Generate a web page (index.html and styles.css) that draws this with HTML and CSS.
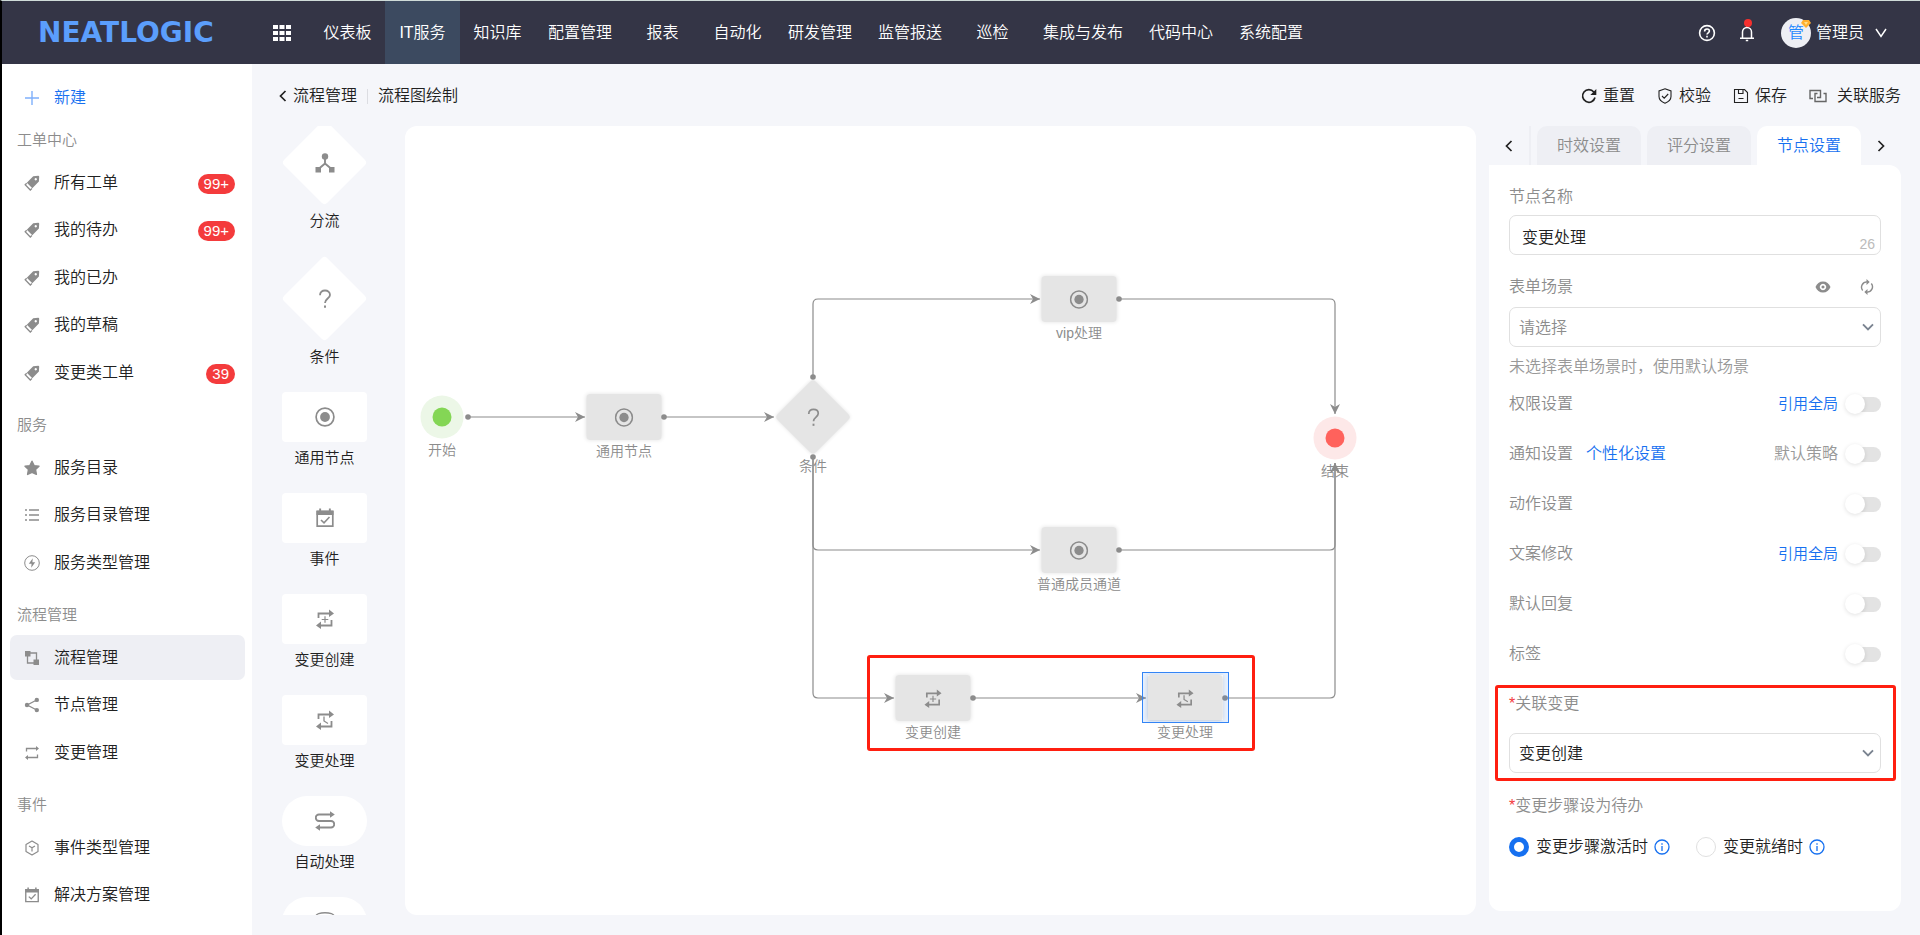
FILE: index.html
```html
<!DOCTYPE html>
<html lang="zh-CN">
<head>
<meta charset="utf-8">
<title>流程图绘制</title>
<link rel="stylesheet" href="styles.css">
</head>
<body>
<svg class="sprite" aria-hidden="true">
  <symbol id="i-tag" viewBox="0 0 16 16"><path fill="currentColor" fill-rule="evenodd" d="M9.2 1.2 14.2.8q1 0 1 1L14.9 6.600 8.300 13.300 2.800 7.700ZM11.700 3a1.200 1.200 0 1 0 .1 0Z"/><path fill="none" stroke="currentColor" stroke-width="1.300" d="M2.700 8.200 1.200 9.800 6.300 15 7.900 13.500"/></symbol>
  <symbol id="i-star" viewBox="0 0 16 16"><path fill="currentColor" stroke="currentColor" stroke-width="1.400" stroke-linejoin="round" d="M8 1.200 10.100 5.600 15 6.200 11.500 9.500 12.400 14.400 8 12.300 3.600 14.400 4.500 9.500 1 6.200 5.900 5.600Z"/></symbol>
  <symbol id="i-list" viewBox="0 0 16 16"><path fill="none" stroke="currentColor" stroke-width="1.400" d="M1 3h2M1 8h2M1 13h2M5 3h10M5 8h10M5 13h10"/></symbol>
  <symbol id="i-bolt" viewBox="0 0 16 16"><circle cx="8" cy="8" r="7.300" fill="none" stroke="currentColor"/><path fill="currentColor" d="M8.800 3.300 4.800 8.800H7.600L7.200 12.700 11.200 7.200H8.400Z"/></symbol>
  <symbol id="i-flow" viewBox="0 0 16 16"><path fill="currentColor" d="M1 1h5.500v5.500H1zM9.500 9.500h5.500v5.500h-5.500z"/><path fill="none" stroke="currentColor" stroke-width="1.300" d="M6 3h6.500v7M3.500 6v7H10"/></symbol>
  <symbol id="i-share" viewBox="0 0 16 16"><path fill="none" stroke="currentColor" stroke-width="1.300" d="M12.700 3 3.200 8l9.500 5"/><g fill="currentColor"><circle cx="12.800" cy="2.900" r="2.200"/><circle cx="3" cy="8" r="2.200"/><circle cx="12.800" cy="13.100" r="2.200"/></g></symbol>
  <symbol id="i-change" viewBox="0 0 16 16"><path fill="none" stroke="currentColor" stroke-width="1.300" d="M2.500 6.500V3.500H13M13.500 9.500v3H3"/><path fill="currentColor" d="M12 1 15 3.500 12 6ZM4 10 1 12.500 4 15Z"/></symbol>
  <symbol id="i-hex" viewBox="0 0 16 16"><path fill="none" stroke="currentColor" stroke-width="1.200" stroke-linejoin="round" d="M8 1 14 4.500v7L8 15 2 11.500v-7ZM5 6 8 7.800 11 6M8 7.800V11.500"/></symbol>
  <symbol id="i-cal" viewBox="0 0 20 20"><path fill="none" stroke="currentColor" stroke-width="1.700" d="M2.200 3.500h15.600v14.700H2.200z"/><path fill="currentColor" d="M1.500 2.500h17V7h-17zM4.200.5h1.900V3H4.200zM13.900.5h1.900V3h-1.900z"/><path fill="none" stroke="currentColor" stroke-width="1.600" d="M6 12 9 14.800 14.500 9"/></symbol>
  <symbol id="i-split" viewBox="0 0 20 20"><circle cx="10" cy="3.500" r="3.200" fill="currentColor"/><path fill="currentColor" d="M.5 14h5.500v5.500H.5zM14 14h5.500v5.500H14z"/><path fill="none" stroke="currentColor" stroke-width="1.900" d="M10 5v5.500L3.500 16M10 10.500 16.500 16"/></symbol>
  <symbol id="i-ask" viewBox="0 0 20 20"><path fill="none" stroke="currentColor" stroke-width="1.800" d="M5 6.200C5 3 7.200 1.500 10 1.500s5 1.700 5 4.400c0 3.400-5 4-5 8"/><path fill="currentColor" d="M9 16.500h2v2.300H9z"/></symbol>
  <symbol id="i-target" viewBox="0 0 20 20"><circle cx="10" cy="10" r="8.900" fill="none" stroke="currentColor" stroke-width="1.700"/><circle cx="10" cy="10" r="4.900" fill="currentColor"/></symbol>
  <symbol id="i-create" viewBox="0 0 20 20"><path fill="none" stroke="currentColor" stroke-width="1.800" d="M3.500 9V4.500H15M16.500 11v5.500H5"/><path fill="currentColor" d="M14 .5 19 4.500 14 8ZM6 12.500 1 16.500 6 20Z"/><path fill="none" stroke="currentColor" stroke-width="1.200" d="M10 7.200v6.600M6.700 10.500h6.600"/></symbol>
  <symbol id="i-handle" viewBox="0 0 20 20"><path fill="none" stroke="currentColor" stroke-width="1.800" d="M3.500 9V4.500H15M16.500 11v5.500H5"/><path fill="currentColor" d="M14 .5 19 4.500 14 8ZM6 12.500 1 16.500 6 20Z"/><path fill="none" stroke="currentColor" stroke-width="1.300" d="M9 6.500V11L13 13.500"/></symbol>
  <symbol id="i-auto" viewBox="0 0 20 20"><path fill="none" stroke="currentColor" stroke-width="1.900" d="M15.500 3.500H4a3.250 3.250 0 0 0 0 6.500h12a3.250 3.250 0 0 1 0 6.500H4.500"/><path fill="currentColor" d="M15 .3 19.800 3.500 15 6.700ZM5 13.300.2 16.500 5 19.700Z"/></symbol>
  <symbol id="i-ring" viewBox="0 0 20 20"><ellipse cx="10" cy="4" rx="9" ry="3.300" fill="none" stroke="currentColor" stroke-width="1.400"/></symbol>
  <symbol id="i-down" viewBox="0 0 12 12"><path fill="none" stroke="currentColor" stroke-width="1.900" d="M1 3.300 6 8.300 11 3.300"/></symbol>
  <symbol id="i-info" viewBox="0 0 16 16"><circle cx="8" cy="8" r="7" fill="none" stroke="currentColor" stroke-width="1.300"/><path stroke="currentColor" stroke-width="1.300" d="M8 7v5M8 4.200v1.500"/></symbol>
</svg>

<header class="topbar">
  <a class="logo" href="#">NEATLOGIC</a>
  <button class="apps" type="button" aria-label="应用"><svg width="18" height="18" viewBox="0 0 18 18"><path fill="#fff" d="M0 1h5v4H0zM6.500 1h5v4h-5zM13 1h5v4h-5zM0 7h5v4H0zM6.500 7h5v4h-5zM13 7h5v4h-5zM0 13h5v4H0zM6.500 13h5v4h-5zM13 13h5v4h-5z"/></svg></button>
  <nav class="mainnav">
    <a href="#">仪表板</a><a class="on" href="#">IT服务</a><a href="#">知识库</a><a href="#">配置管理</a><a href="#">报表</a><a href="#">自动化</a><a href="#">研发管理</a><a href="#">监管报送</a><a href="#">巡检</a><a href="#">集成与发布</a><a href="#">代码中心</a><a href="#">系统配置</a>
  </nav>
  <div class="tools">
    <button type="button" aria-label="帮助"><svg width="18" height="18" viewBox="0 0 18 18" fill="none" stroke="#fff" stroke-width="1.600"><circle cx="9" cy="9" r="7.400"/><path d="M6.600 7.400C6.600 5.700 7.700 5 9 5s2.400.8 2.400 2.100c0 1.700-2.400 1.800-2.400 3.500M9 11.800v1.600"/></svg></button>
    <button class="bell" type="button" aria-label="消息"><svg width="16" height="18" viewBox="0 0 16 18" fill="none" stroke="#fff" stroke-width="1.500"><path d="M3.500 14V8a4.500 4.500 0 0 1 9 0v6M1 14.200h14M6.800 16.500h2.400M8 1.500v2"/></svg><i class="dot"></i></button>
    <button class="user" type="button"><span class="avatar">管<svg width="10" height="8" viewBox="0 0 10 8"><path fill="#ffb02e" d="M2 0h6l2 3-5 5-5-5Z"/><path fill="#ffe08a" d="M3 2h4L5 5Z"/></svg></span>管理员<svg class="caret" width="12" height="10" viewBox="0 0 12 10"><path fill="none" stroke="#fff" stroke-width="1.500" d="M1 1 6 8.500 11 1"/></svg></button>
  </div>
</header>

<div class="shell">
  <aside class="sidebar">
    <a class="item create" href="#"><svg viewBox="-1 -1 16 16"><path stroke="#7fb0fb" stroke-width="1.400" d="M7 0v14M0 7h14"/></svg>新建</a>
    <section><h2>工单中心</h2>
      <a class="item" href="#"><svg><use href="#i-tag"/></svg>所有工单<b>99+</b></a>
      <a class="item" href="#"><svg><use href="#i-tag"/></svg>我的待办<b>99+</b></a>
      <a class="item" href="#"><svg><use href="#i-tag"/></svg>我的已办</a>
      <a class="item" href="#"><svg><use href="#i-tag"/></svg>我的草稿</a>
      <a class="item" href="#"><svg><use href="#i-tag"/></svg>变更类工单<b>39</b></a>
    </section>
    <section><h2>服务</h2>
      <a class="item" href="#"><svg><use href="#i-star"/></svg>服务目录</a>
      <a class="item" href="#"><svg><use href="#i-list"/></svg>服务目录管理</a>
      <a class="item" href="#"><svg><use href="#i-bolt"/></svg>服务类型管理</a>
    </section>
    <section><h2>流程管理</h2>
      <a class="item on" href="#"><svg><use href="#i-flow"/></svg>流程管理</a>
      <a class="item" href="#"><svg><use href="#i-share"/></svg>节点管理</a>
      <a class="item" href="#"><svg><use href="#i-change"/></svg>变更管理</a>
    </section>
    <section><h2>事件</h2>
      <a class="item" href="#"><svg><use href="#i-hex"/></svg>事件类型管理</a>
      <a class="item" href="#"><svg><use href="#i-cal"/></svg>解决方案管理</a>
    </section>
  </aside>

  <main class="main">
    <div class="toolbar">
      <a class="back" href="#"><svg width="8" height="12" viewBox="0 0 8 12"><path fill="none" stroke="currentColor" stroke-width="1.700" d="M6.500 1 1.500 6l5 5"/></svg>流程管理</a>
      <span class="sep"></span>
      <h1>流程图绘制</h1>
      <div class="actions">
        <button type="button"><svg width="16" height="16" viewBox="0 0 16 16"><path fill="none" stroke="currentColor" stroke-width="1.700" d="M14 9.500A6.300 6.300 0 1 1 12.800 4"/><path fill="currentColor" d="M15.300 1v6H9.300Z"/></svg>重置</button>
        <button type="button"><svg width="16" height="16" viewBox="0 0 16 16" fill="none" stroke="currentColor" stroke-width="1.100"><path d="M8 .8 14 3v5.500c0 3.500-3 5.500-6 6.700-3-1.200-6-3.200-6-6.700V3ZM5 8l2.200 2.200L11.200 6"/></svg>校验</button>
        <button type="button"><svg width="16" height="16" viewBox="0 0 16 16" fill="none" stroke="currentColor" stroke-width="1.100"><path d="M1.500 1.500h10l3 3v10h-13ZM5.500 1.500v4h4.500v-4M5.500 10.500h5"/></svg>保存</button>
        <button class="wide" type="button"><svg width="18" height="14" viewBox="0 0 18 14" fill="none" stroke="#666" stroke-width="1.400"><path d="M4 9.500H1V1.500h10.500V8.500H8M8.500 4.500H6v8H17v-8h-2.500"/></svg>关联服务</button>
      </div>
    </div>

    <div class="workspace">
      <div class="palette">
        <div class="piece"><div class="shape dia"><svg><use href="#i-split"/></svg></div>分流</div>
        <div class="piece"><div class="shape dia"><svg><use href="#i-ask"/></svg></div>条件</div>
        <div class="piece"><div class="shape"><svg><use href="#i-target"/></svg></div>通用节点</div>
        <div class="piece"><div class="shape"><svg><use href="#i-cal"/></svg></div>事件</div>
        <div class="piece"><div class="shape"><svg><use href="#i-create"/></svg></div>变更创建</div>
        <div class="piece"><div class="shape"><svg><use href="#i-handle"/></svg></div>变更处理</div>
        <div class="piece"><div class="shape pill"><svg><use href="#i-auto"/></svg></div>自动处理</div>
        <div class="piece"><div class="shape pill"><svg><use href="#i-ring"/></svg></div></div>
      </div>

      <div class="canvas">
        <div class="node round start"><i></i><span>开始</span></div>
        <div class="node box general"><svg><use href="#i-target"/></svg><span>通用节点</span></div>
        <div class="node cond"><svg><use href="#i-ask"/></svg><span>条件</span></div>
        <div class="node box vip"><svg><use href="#i-target"/></svg><span>vip处理</span></div>
        <div class="node box member"><svg><use href="#i-target"/></svg><span>普通成员通道</span></div>
        <div class="node box build"><svg><use href="#i-create"/></svg><span>变更创建</span></div>
        <div class="node box handle"><svg><use href="#i-handle"/></svg><span>变更处理</span></div>
        <div class="node round end"><i></i><span>结束</span></div>
        <svg class="edges" aria-hidden="true">
          <defs><marker id="arr" viewBox="0 0 10 10" refX="10" refY="5" markerWidth="10" markerHeight="10" orient="auto" markerUnits="userSpaceOnUse"><path fill="#8c8c8c" d="M0 0 10 5 0 10 3 5Z"/></marker></defs>
          <g fill="none" stroke="#8c8c8c" stroke-width="1.200">
            <path marker-end="url(#arr)" d="M63 291H180"/>
            <path marker-end="url(#arr)" d="M259 291H369"/>
            <path marker-end="url(#arr)" d="M408 251V178q0-5 5-5H635"/>
            <path marker-end="url(#arr)" d="M408 331V419q0 5 5 5H635"/>
            <path marker-end="url(#arr)" d="M408 331V567q0 5 5 5H489"/>
            <path marker-end="url(#arr)" d="M714 173H925q5 0 5 5V288"/>
            <path marker-end="url(#arr)" d="M714 424H925q5 0 5-5V337"/>
            <path marker-end="url(#arr)" d="M568 572H741"/>
            <path marker-end="url(#arr)" d="M820 572H925q5 0 5-5V337"/>
          </g>
          <g fill="#8c8c8c"><circle cx="63" cy="291" r="2.800"/><circle cx="259" cy="291" r="2.800"/><circle cx="408" cy="251" r="2.800"/><circle cx="408" cy="331" r="2.800"/><circle cx="714" cy="173" r="2.800"/><circle cx="714" cy="424" r="2.800"/><circle cx="568" cy="572" r="2.800"/><circle cx="820" cy="572" r="2.800"/></g>
        </svg>
        <div class="selection"></div>
        <div class="mark mark-nodes"></div>
      </div>

      <div class="panel">
        <div class="tabs">
          <button class="arrow" type="button" aria-label="上一个"><svg width="8" height="12" viewBox="0 0 8 12"><path fill="none" stroke="currentColor" stroke-width="1.700" d="M6.500 1 1.500 6l5 5"/></svg></button>
          <span class="cut"></span>
          <button class="tab" type="button">时效设置</button>
          <button class="tab" type="button">评分设置</button>
          <button class="tab on" type="button">节点设置</button>
          <button class="arrow" type="button" aria-label="下一个"><svg width="8" height="12" viewBox="0 0 8 12"><path fill="none" stroke="currentColor" stroke-width="1.700" d="M1.500 1l5 5-5 5"/></svg></button>
        </div>
        <form class="form">
          <label class="lbl" for="f-name">节点名称</label>
          <div class="field"><input id="f-name" type="text" value="变更处理"><em>26</em></div>
          <div class="lblrow"><label for="f-scene">表单场景</label>
            <button type="button" aria-label="查看"><svg width="16" height="12" viewBox="0 0 16 12"><path fill="currentColor" fill-rule="evenodd" d="M8 .5c3.500 0 6.200 2 7.500 5.500C14.200 9.500 11.500 11.500 8 11.500S1.800 9.500.5 6C1.800 2.500 4.500.5 8 .5ZM8 2.800a3.200 3.200 0 1 0 .01 0ZM8 4.500a1.500 1.500 0 1 1-.01 0Z"/></svg></button>
            <button type="button" aria-label="刷新"><svg width="14" height="16" viewBox="0 0 14 16"><path fill="none" stroke="currentColor" stroke-width="1.400" d="M2.700 11.500A5.300 5.300 0 0 1 7 2.900M11.300 4.500A5.300 5.300 0 0 1 7 13.100"/><path fill="currentColor" d="M6.500 0 9.700 3 6.500 6ZM7.500 10 4.300 13 7.500 16Z"/></svg></button>
          </div>
          <div class="field"><select id="f-scene" class="empty"><option>请选择</option></select><svg class="chev"><use href="#i-down"/></svg></div>
          <p class="hint">未选择表单场景时，使用默认场景</p>
          <div class="row"><label for="s1">权限设置</label><a class="small push" href="#">引用全局</a><input id="s1" type="checkbox" class="switch"></div>
          <div class="row"><label for="s2">通知设置</label><a href="#">个性化设置</a><span class="muted push">默认策略</span><input id="s2" type="checkbox" class="switch"></div>
          <div class="row"><label for="s3">动作设置</label><input id="s3" type="checkbox" class="switch push"></div>
          <div class="row"><label for="s4">文案修改</label><a class="small push" href="#">引用全局</a><input id="s4" type="checkbox" class="switch"></div>
          <div class="row"><label for="s5">默认回复</label><input id="s5" type="checkbox" class="switch push"></div>
          <div class="row"><label for="s6">标签</label><input id="s6" type="checkbox" class="switch push"></div>
          <div class="linked">
            <label class="req" for="f-link">关联变更</label>
            <div class="field"><select id="f-link"><option>变更创建</option></select><svg class="chev"><use href="#i-down"/></svg></div>
            <div class="mark mark-link"></div>
          </div>
          <fieldset>
            <legend class="req">变更步骤设为待办</legend>
            <div class="radios">
              <input id="r1" type="radio" name="todo" checked><label for="r1">变更步骤激活时</label><svg class="info"><use href="#i-info"/></svg>
              <input id="r2" type="radio" name="todo"><label for="r2">变更就绪时</label><svg class="info"><use href="#i-info"/></svg>
            </div>
          </fieldset>
        </form>
      </div>
    </div>
  </main>
</div>
</body>
</html>
```

FILE: styles.css
```css
* { box-sizing: border-box; }

body {
  margin: 0;
  height: 100vh;
  display: flex;
  flex-direction: column;
  overflow: hidden;
  border-left: 2px solid #000;
  border-top: 1px solid #cfdbd8;
  background: #f5f6fa;
  color: #212121;
  font: 350 16px/24px "Liberation Sans", "Noto Sans CJK SC", sans-serif;
}

a { color: inherit; text-decoration: none; }
button { border: 0; padding: 0; background: none; color: inherit; font: inherit; cursor: pointer; }
svg { display: block; flex: none; }
h1, h2, p { margin: 0; font-size: inherit; font-weight: inherit; }
.sprite { position: absolute; width: 0; height: 0; }

/* top bar */
.topbar { display: flex; align-items: stretch; flex: none; height: 63px; background: #343546; color: #fff; }
.logo { width: 220px; padding-left: 36px; flex: none; font: 700 28px/63px "DejaVu Sans", sans-serif; color: #5b9efc; }
.apps { width: 88px; padding-left: 51px; display: flex; align-items: center; flex: none; }
.mainnav { display: flex; }
.mainnav a { min-width: 75px; padding: 0 13px; display: flex; align-items: center; justify-content: center; white-space: nowrap; }
.mainnav .on { background: #3c4a60; }
.tools { margin-left: auto; padding-right: 33px; display: flex; align-items: center; gap: 23px; }
.bell { position: relative; }
.bell .dot { position: absolute; top: -5px; left: 5px; width: 8px; height: 8px; border-radius: 50%; background: #f5302e; }
.user { margin-left: 3px; display: flex; align-items: center; gap: 5px; white-space: nowrap; }
.avatar { position: relative; width: 30px; height: 30px; border-radius: 50%; background: #eeeff4; color: #1e88ff; line-height: 30px; text-align: center; }
.avatar svg { position: absolute; top: 2px; right: 0; }
.caret { margin-left: 6px; }

.shell { flex: 1; min-height: 0; display: flex; }

/* sidebar */
.sidebar { width: 250px; flex: none; padding: 11px 7px 0 8px; background: #fff; overflow: hidden; }
.sidebar section { padding-bottom: 8px; }
.sidebar h2 { padding: 0 7px; font-size: 15px; line-height: 40px; color: #8c8c8c; }
.item { height: 45px; margin-bottom: 2px; padding: 0 10px 0 14px; display: flex; align-items: center; border-radius: 7px; }
.item:nth-of-type(even) { margin-bottom: 3px; }
.item svg { width: 16px; height: 16px; margin-right: 14px; color: #8c8c8c; }
.item b { margin: 3px 0 0 auto; padding: 0 6px; border-radius: 10px; background: #f43b3c; color: #fff; font-size: 15px; font-weight: 400; line-height: 20px; }
.item.on { background: #eeeff4; }
.sidebar .create { margin-bottom: 0; color: #1670f0; }

/* main area */
.main { flex: 1; min-width: 0; display: flex; flex-direction: column; }
.toolbar { flex: none; height: 62px; padding: 2px 19px 0 27px; display: flex; align-items: center; }
.back, .actions button { display: flex; align-items: center; gap: 6px; white-space: nowrap; }
.sep { width: 1px; height: 15px; margin: 0 10px; background: #dcdde2; }
.actions { margin-left: auto; display: flex; gap: 22px; }
.actions .wide { gap: 10px; }
.workspace { flex: 1; min-height: 0; display: flex; padding: 0 19px 20px 30px; }

/* palette */
.palette { width: 85px; flex: none; margin-right: 38px; overflow: hidden; }
.piece { height: 101px; text-align: center; font-size: 15px; }
.piece:has(.dia) { height: 136px; }
.piece:first-child { margin-top: -6px; }
.shape { position: relative; height: 50px; margin-bottom: 4px; display: flex; align-items: center; justify-content: center; border-radius: 4px; background: #fff; color: #8c8c8c; }
.shape svg { position: relative; width: 20px; height: 20px; }
.pill { border-radius: 25px; }
.dia { height: 85px; background: none; }
.dia::before { content: ""; position: absolute; top: 12px; left: 12px; width: 61px; height: 61px; border-radius: 4px; background: #fff; transform: rotate(45deg); }

/* canvas */
.canvas { position: relative; flex: 1; min-width: 0; margin-right: 13px; overflow: hidden; border-radius: 12px; background: #fff; }
.edges { position: absolute; inset: 0; width: 100%; height: 100%; }
.node { position: absolute; display: flex; align-items: center; justify-content: center; transform: translate(-50%, -50%); color: #8c8c8c; }
.node svg { position: relative; width: 19px; height: 19px; }
.node span { position: absolute; top: 100%; left: 50%; transform: translateX(-50%); white-space: nowrap; font-size: 14px; line-height: 22px; }
.box { width: 75px; height: 46px; border-radius: 4px; background: #e5e5e5; box-shadow: 0 0 4px rgba(0, 0, 0, .12); }
.round { width: 43px; height: 43px; border-radius: 50%; }
.round i { width: 19px; height: 19px; border-radius: 50%; }
.start { left: 37px; top: 291px; background: #ecf7e7; }
.start i { background: #84d655; }
.end { left: 930px; top: 312px; background: #fde8e8; }
.end i { background: #ff625c; }
.general { left: 219px; top: 291px; }
.cond { left: 408px; top: 291px; width: 76px; height: 76px; }
.cond::before { content: ""; position: absolute; top: 11px; left: 11px; width: 54px; height: 54px; border-radius: 4px; background: #e5e5e5; box-shadow: 0 0 4px rgba(0, 0, 0, .12); transform: rotate(45deg); }
.vip { left: 674px; top: 173px; }
.member { left: 674px; top: 424px; }
.build { left: 528px; top: 572px; }
.handle { left: 780px; top: 572px; }
.selection { position: absolute; left: 737px; top: 546px; width: 87px; height: 51px; border: 1px solid #3384f5; background: rgba(51, 132, 245, .12); clip-path: polygon(evenodd, 0 0, 100% 0, 100% 100%, 0 100%, 0 0, 6px 3px, 6px 48px, 81px 48px, 81px 3px, 6px 3px); }
.mark { position: absolute; border: 3px solid #ff1f10; border-radius: 3px; pointer-events: none; }
.mark-nodes { left: 462px; top: 529px; width: 388px; height: 96px; }

/* settings panel */
.panel { width: 412px; flex: none; margin-bottom: 4px; display: flex; flex-direction: column; }
.tabs { height: 39px; flex: none; display: flex; gap: 6px; }
.arrow { width: 40px; display: flex; align-items: center; justify-content: center; margin-right: -6px; }
.cut { width: 2px; background: #eeeff4; }
.tab { flex: 1; border-radius: 10px 10px 0 0; background: #eeeff4; color: #8c8c8c; }
.tab.on { background: #fff; color: #1670f0; }
.tabs .arrow:last-child { margin: 0 0 0 -6px; }
.form { flex: 1; padding: 20px; border-radius: 0 12px 12px 12px; background: #fff; color: #8c8c8c; }
.form a { color: #1670f0; }
.lbl { display: block; margin-bottom: 6px; }
.field { position: relative; display: flex; }
.field input, .field select { width: 100%; height: 40px; padding: 1px 12px 0; border: 1px solid #e0e0e0; border-radius: 7px; background: #fff; color: #212121; font: inherit; appearance: none; outline: 0; }
.field select { padding: 1px 9px 0; }
.field .empty { color: #8c8c8c; }
.field em { position: absolute; right: 6px; bottom: 1px; font-size: 14px; line-height: 20px; font-style: normal; color: #bbb; }
.chev { position: absolute; right: 7px; top: 14px; width: 12px; height: 12px; color: #7a8390; }
.lblrow { margin: 20px 0 8px; display: flex; align-items: center; }
.lblrow label { margin-right: auto; }
.lblrow button { margin: 0 7px 0 22px; }
.hint { margin: 8px 0 0; color: #999; }
.row { height: 50px; display: flex; align-items: center; gap: 7px; }
.row a:not(.small) { margin-left: 6px; }
.small { font-size: 15px; }
.row .push { margin-left: auto; }
.muted { color: #999; }
.switch { position: relative; width: 36px; height: 15px; margin: 0; appearance: none; border-radius: 8px; background: linear-gradient(90deg, transparent 12px, #e3e3e3 12px); }
.switch::before { content: ""; position: absolute; top: -3px; left: 0; width: 20px; height: 20px; border-radius: 50%; background: #fff; box-shadow: 0 1px 4px rgba(0, 0, 0, .12); }
.linked { position: relative; padding: 13px 0 21px; }
.linked .req { display: block; margin-bottom: 17px; }
.req::before { content: "*"; color: #f43b3c; }
.mark-link { inset: 6px -15px 13px -14px; }
fieldset { margin: 0; padding: 0; border: 0; }
legend { padding: 0; margin-bottom: 17px; }
.radios { display: flex; align-items: center; color: #212121; }
.radios input { width: 20px; height: 20px; margin: 0 7px 0 0; appearance: none; border: 1px solid #e0e0e0; border-radius: 50%; }
.radios input:checked { border: 5px solid #1670f0; }
.info { width: 16px; height: 16px; margin: 0 26px 0 6px; color: #1670f0; }
```
